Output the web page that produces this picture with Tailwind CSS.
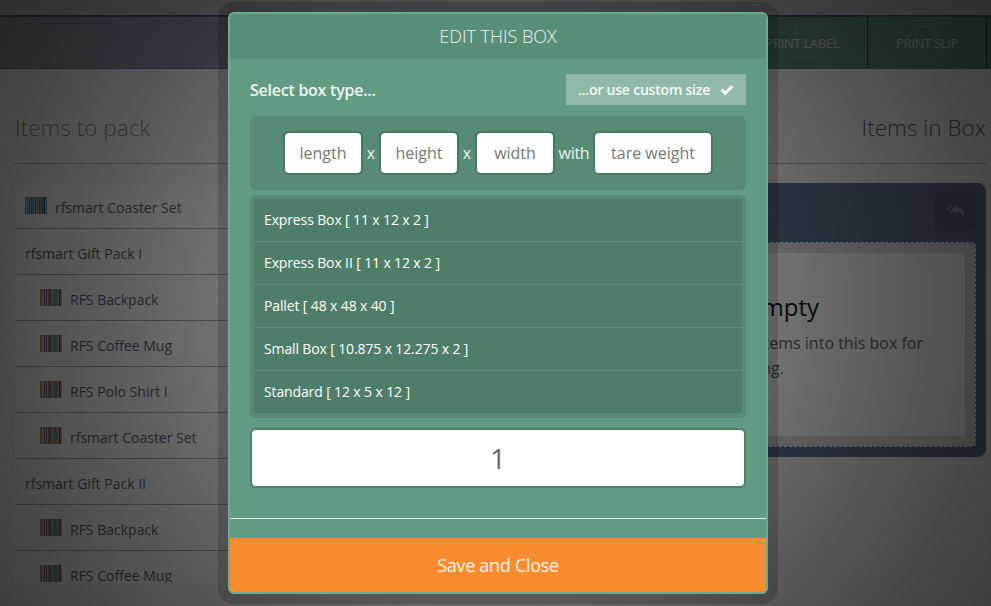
<!DOCTYPE html>
<html lang="en">
<head>
<meta charset="utf-8">
<title>Edit this box</title>
<script src="https://cdn.jsdelivr.net/npm/@tailwindcss/browser@4"></script>
</head>
<body class="relative h-[606px] w-[991px] overflow-hidden bg-[#e2e2e2] font-['Open_Sans',sans-serif] text-[#515c73]">
<svg class="hidden">
  <symbol id="barcode" viewBox="0 0 22 17" shape-rendering="crispEdges">
    <path fill="#b5aaa4" d="M0 0h22v17H0z"/>
    <path fill="#a87c64" d="M0 0h2v17H0zM13 0h1v17h-1zM17 0h1v17h-1z"/>
    <path fill="#6d5c80" d="M4 0h1v17H4zM6 0h1v17H6zM9 0h1v17H9z"/>
    <path fill="#a07458" d="M8 0h1v17H8zM11 0h1v17h-1zM15 0h1v17h-1z"/>
    <path fill="#728c80" d="M10 0h1v17h-1zM14 0h1v17h-1zM16 0h1v17h-1z"/>
    <path fill="#3e4a48" d="M19 0h1v17h-1z"/><path fill="#a07050" d="M20 0h1v17h-1z"/>
  </symbol>
  <symbol id="barcode-blue" viewBox="0 0 22 17" shape-rendering="crispEdges">
    <path fill="#90aebc" d="M0 0h22v17H0z"/>
    <path fill="#708694" d="M0 0h1v17H0zM2 0h1v17H2zM7 0h1v17H7zM12 0h1v17h-1z"/>
    <path fill="#54646e" d="M4 0h1v17H4zM6 0h1v17H6zM10 0h1v17h-1zM14 0h1v17h-1z"/>
    <path fill="#a07c54" d="M15 0h2v17h-2z"/><path fill="#4a84b0" d="M17 0h2v17h-2z"/>
    <path fill="#304848" d="M19 0h1v17h-1z"/><path fill="#5c9c94" d="M21 0h1v17h-1zM8 0h1v17H8z"/>
  </symbol>
  <symbol id="printer" viewBox="0 0 36 36" fill="none" stroke="currentColor" stroke-width="3">
    <path d="M7 18V2h16l6 6v10M23 2v7h6M7 29H2V20q0-3 3-3h26q3 0 3 3v9h-5M7 24h22v10H7z"/>
  </symbol>
</svg>

<div class="flex h-full flex-col bg-[repeating-linear-gradient(45deg,rgba(0,0,0,0.025)_0_1px,transparent_1px_4px)]">
  <div class="h-[15px] shrink-0 bg-[#a5a8ad]"></div>
  <nav class="flex h-[54px] shrink-0 justify-end border-t-2 border-b border-t-[#46506a] border-b-[#5e6580] bg-linear-to-r from-[#808894] via-[#808ba3] to-[#808894] text-[13px] tracking-[-0.3px] text-[#c0c4c2]">
    <div class="relative flex w-[120px] items-center justify-center border-r border-[#1c3a2c] bg-[#56846a] pt-[2px]"><svg class="absolute top-[7px] left-[40px] size-9 text-[#5f8b71]"><use href="#printer"/></svg><span class="relative -left-[5px]">PRINT LABEL</span></div>
    <div class="relative flex w-[119px] items-center justify-center border-r border-[#1c3a2c] bg-[#56846a] pt-[2px]"><svg class="absolute top-[7px] left-[40px] size-9 text-[#5f8b71]"><use href="#printer"/></svg><span class="relative">PRINT SLIP</span></div>
    <div class="w-1 bg-[#56846a]"></div>
  </nav>
  <div class="mr-[5px] ml-[15px] flex h-[95px] shrink-0 items-center justify-between border-b border-[#a4a4a4] pt-6 text-[22.5px] font-light">
    <h2 class="text-[#a07c5c]">Items to pack</h2>
    <h2 class="text-[#4b5a78]">Items in Box</h2>
  </div>
  <main class="flex pt-[19px] pl-[15px]">
    <ul class="h-[400px] w-[425px] overflow-hidden bg-white/20 text-sm">
      <li class="flex h-[46px] items-center gap-2 border-b border-[#9a9eae] pt-1 pl-[10px]"><svg class="-mt-[5px] h-[17px] w-[22px]"><use href="#barcode-blue"/></svg>rfsmart Coaster Set</li>
      <li class="flex h-[46px] items-center border-b border-[#9a9eae] pt-1 pl-[10px]">rfsmart Gift Pack I</li>
      <li class="flex h-[46px] items-center gap-2 border-b border-[#9a9eae] pt-1 pl-[25px]"><svg class="-mt-[5px] h-[17px] w-[22px]"><use href="#barcode"/></svg>RFS Backpack</li>
      <li class="flex h-[46px] items-center gap-2 border-b border-[#9a9eae] pt-1 pl-[25px]"><svg class="-mt-[5px] h-[17px] w-[22px]"><use href="#barcode"/></svg>RFS Coffee Mug</li>
      <li class="flex h-[46px] items-center gap-2 border-b border-[#9a9eae] pt-1 pl-[25px]"><svg class="-mt-[5px] h-[17px] w-[22px]"><use href="#barcode"/></svg>RFS Polo Shirt I</li>
      <li class="flex h-[46px] items-center gap-2 border-b border-[#9a9eae] pt-1 pl-[25px]"><svg class="-mt-[5px] h-[17px] w-[22px]"><use href="#barcode"/></svg>rfsmart Coaster Set</li>
      <li class="flex h-[46px] items-center border-b border-[#9a9eae] pt-1 pl-[10px]">rfsmart Gift Pack II</li>
      <li class="flex h-[46px] items-center gap-2 border-b border-[#9a9eae] pt-1 pl-[25px]"><svg class="-mt-[5px] h-[17px] w-[22px]"><use href="#barcode"/></svg>RFS Backpack</li>
      <li class="flex h-[46px] items-center gap-2 pt-1 pl-[25px]"><svg class="-mt-[5px] h-[17px] w-[22px]"><use href="#barcode"/></svg>RFS Coffee Mug</li>
    </ul>
    <section class="mr-[5px] ml-auto h-[274px] w-[490px] rounded-lg bg-linear-to-r from-[#506b8a] to-[#5c6a84] p-[10px]">
      <div class="flex h-[49px] justify-end"><button class="flex h-[38px] w-[41px] items-center justify-center rounded bg-[#505d76] text-[#818a9c]"><svg class="h-[16px] w-[18px]" viewBox="0 0 18 16" fill="currentColor"><path d="M5 0 0 5l5 5V8L2 5l3-3zM9 0v3c6 0 8 3 8 6 0 2-1 4-2 6 1-4-1-7-6-7v3L4 5.5z"/></svg></button></div>
      <div class="h-[205px] rounded-[4px] border border-dashed border-[#eeeeee] bg-[#cecece] bg-clip-padding p-[10px]">
        <div class="flex h-full flex-col items-center bg-[#eaeaea] pt-[36px] text-center">
          <h3 class="w-full pr-[146px] text-right text-[24px] leading-9 text-[#151515]">This box is empty</h3>
          <p class="mt-[6px] w-full pr-[42px] text-right text-[16px] leading-[25px] text-[#5c5c5c]">Drag and drop items into this box for<br><span class="pr-[139px]">packing.</span></p>
        </div>
      </div>
    </section>
  </main>
</div>

<div class="absolute inset-0 bg-[radial-gradient(circle_at_center,rgba(0,0,0,0.38)_0%,rgba(0,0,0,0.5)_46%,rgba(0,0,0,0.6)_66%,rgba(0,0,0,0.69)_88%,rgba(0,0,0,0.72)_100%)]"></div>

<div role="dialog" class="absolute top-3 left-[228px] flex h-[582px] w-[540px] flex-col overflow-hidden rounded-md border-2 border-[#6fa991] bg-[#619b82] text-white/90 shadow-[0_0_0_10px_rgba(0,0,0,0.16)]">
  <header class="flex h-[45px] shrink-0 items-center justify-center bg-[#588f77] text-[18px] font-light">EDIT THIS BOX</header>
  <div class="flex h-[459px] shrink-0 flex-col px-5 pt-[15px]">
    <div class="flex h-[31px] items-center justify-between">
      <span class="text-[16px] font-semibold tracking-[-0.25px]">Select box type...</span>
      <button class="flex h-[31px] w-[180px] items-center gap-[10px] bg-white/30 pl-3 text-sm font-semibold tracking-[-0.2px]">...or use custom size<svg class="size-[14px]" viewBox="0 0 14 14" fill="none" stroke="currentColor" stroke-width="3.2"><path d="M1.5 6.5 5.3 10.3 12.5 3"/></svg></button>
    </div>
    <div class="mt-[11px] flex h-[74px] items-center justify-center rounded-md bg-[#578b74] text-[16px]">
      <div class="flex h-11 w-20 items-center justify-center rounded-md border-2 border-[#477862] bg-white text-[#777]">length</div><span class="w-4 text-center">x</span>
      <div class="flex h-11 w-20 items-center justify-center rounded-md border-2 border-[#477862] bg-white text-[#777]">height</div><span class="w-4 text-center">x</span>
      <div class="flex h-11 w-20 items-center justify-center rounded-md border-2 border-[#477862] bg-white text-[#777]">width</div><span class="w-[38px] text-center tracking-[-0.3px]">with</span>
      <div class="flex h-11 w-[120px] items-center justify-center rounded-md border-2 border-[#477862] bg-white text-[#777]">tare weight</div>
    </div>
    <div class="mt-[5px] h-[223px] rounded-md bg-[#578b74] p-1 text-sm tracking-[-0.13px] text-white">
      <ul class="h-[214px] bg-[#4e7d68]">
        <li class="flex h-[43px] items-center border-b border-[#5b8f78] pl-[10px]">Express Box [ 11 x 12 x 2 ]</li>
        <li class="flex h-[43px] items-center border-b border-[#5b8f78] pl-[10px]">Express Box II [ 11 x 12 x 2 ]</li>
        <li class="flex h-[43px] items-center border-b border-[#5b8f78] pl-[10px]">Pallet [ 48 x 48 x 40 ]</li>
        <li class="flex h-[43px] items-center border-b border-[#5b8f78] pl-[10px]">Small Box [ 10.875 x 12.275 x 2 ]</li>
        <li class="flex h-[42px] items-center pl-[10px]">Standard [ 12 x 5 x 12 ]</li>
      </ul>
    </div>
    <div class="mt-[10px] flex h-[60px] items-center justify-center rounded-md border-2 border-[#4e7d68] bg-white text-[28px] text-[#666]">1</div>
  </div>
  <div class="h-5 shrink-0 border-t border-[#e4e4e4]"></div>
  <button class="flex-1 bg-[#fa8c30] text-[18px] font-normal tracking-[-0.3px]">Save and Close</button>
</div>
</body>
</html>
